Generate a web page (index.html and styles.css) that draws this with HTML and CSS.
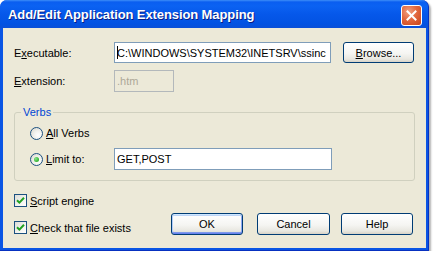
FILE: index.html
```html
<!doctype html>
<html>
<head>
<meta charset="utf-8">
<link rel="stylesheet" href="styles.css">
<title>Add/Edit Application Extension Mapping</title>
</head>
<body>
<div class="window">
  <div class="titlebar">
    <span class="title">Add/Edit Application Extension Mapping</span>
    <span class="close">
      <svg width="11" height="11" viewBox="0 0 11 11"><path d="M1.5 1.5 L9.5 9.5 M9.5 1.5 L1.5 9.5" stroke="#fff" stroke-width="2" stroke-linecap="square"/></svg>
    </span>
  </div>
  <div class="client">
    <div class="row">
      <span class="label">E<u>x</u>ecutable:</span>
      <div class="field field-exe"><span class="caret"></span>C:\WINDOWS\SYSTEM32\INETSRV\ssinc</div>
      <div class="button button-browse"><span><u>B</u>rowse...</span></div>
    </div>
    <div class="row row-ext">
      <span class="label"><u>E</u>xtension:</span>
      <div class="field field-ext disabled">.htm</div>
    </div>
    <fieldset class="group">
      <legend>Verbs</legend>
      <div class="option">
        <span class="radio"></span>
        <span class="option-label"><u>A</u>ll Verbs</span>
      </div>
      <div class="option">
        <span class="radio checked"><span class="dot"></span></span>
        <span class="option-label"><u>L</u>imit to:</span>
        <div class="field field-verbs">GET,POST</div>
      </div>
    </fieldset>
    <div class="footer">
      <div class="checks">
        <div class="check">
          <span class="box"><svg width="9" height="9" viewBox="0 0 9 9"><path d="M1 4.2 L3.4 6.6 L8 1.8" fill="none" stroke="#21a121" stroke-width="2"/></svg></span>
          <span><u>S</u>cript engine</span>
        </div>
        <div class="check">
          <span class="box"><svg width="9" height="9" viewBox="0 0 9 9"><path d="M1 4.2 L3.4 6.6 L8 1.8" fill="none" stroke="#21a121" stroke-width="2"/></svg></span>
          <span><u>C</u>heck that file exists</span>
        </div>
      </div>
      <div class="buttons">
        <div class="button button-default">OK</div>
        <div class="button button-cancel">Cancel</div>
        <div class="button">Help</div>
      </div>
    </div>
  </div>
</div>
</body>
</html>
```
FILE: styles.css
```css
body {
    margin: 0;
    background-color: #fff;
    font-family: "Liberation Sans", Arial, sans-serif;
    font-size: 11px;
    color: #000;
}
u {
    text-decoration: underline;
    text-underline-offset: 1px;
}
.window {
    width: 429px;
    height: 251px;
    display: flex;
    flex-direction: column;
    background-color: #0a55e4;
    border-radius: 7px 7px 0 0;
    box-shadow: 2px 2px 2px rgba(0, 0, 0, 0.3);
    border-right: 1px solid #0831c0;
    border-bottom: 1px solid #0831c0;
    box-sizing: border-box;
}
.titlebar {
    height: 28px;
    flex: none;
    display: flex;
    align-items: center;
    padding: 0 6px 0 8px;
    border-radius: 7px 7px 0 0;
    background: linear-gradient(#3d8ef8 0, #0a5ef0 2px, #0b62f2 6px, #0658ea 14px, #0252e2 24px, #0a4fd8 28px);
}
.title {
    color: #fff;
    font-weight: bold;
    font-size: 13px;
    letter-spacing: -0.1px;
    text-shadow: 1px 1px 0 #0a1e84;
}
.close {
    margin-left: auto;
    margin-top: 3px;
    width: 21px;
    height: 21px;
    box-sizing: border-box;
    border: 1px solid #fff;
    border-radius: 3px;
    display: flex;
    align-items: center;
    justify-content: center;
    background: radial-gradient(circle at 35% 30%, #f0a183 0, #e2683f 45%, #c8431a 100%);
}
.client {
    flex: 1;
    margin: 0 2px 2px 3px;
    background-color: #ece9d8;
    padding: 14px 0 0 11px;
}
.row {
    display: flex;
    align-items: center;
}
.label {
    width: 100px;
}
.field {
    box-sizing: border-box;
    height: 21px;
    border: 1px solid #7f9db9;
    background-color: #fff;
    padding: 0 2px;
    display: flex;
    align-items: center;
    white-space: nowrap;
    overflow: hidden;
}
.field-exe {
    width: 217px;
}
.caret {
    display: inline-block;
    width: 1px;
    height: 13px;
    background-color: #000;
    margin-right: -1px;
}
.row-ext {
    margin-top: 7px;
}
.field-ext {
    width: 60px;
    height: 22px;
}
.disabled {
    background-color: #ece9d8;
    border-color: #b3b8bb;
    color: #aca899;
}
.button {
    box-sizing: border-box;
    height: 22px;
    width: 72px;
    border: 1px solid #003c74;
    border-radius: 3px;
    display: flex;
    align-items: center;
    justify-content: center;
    background: linear-gradient(#fff 0, #f5f5f2 55%, #e8e7e0 85%, #d7d2c6 100%);
}
.button-browse {
    margin-left: 12px;
    width: 71px;
    height: 21px;
}
.button-default {
    box-shadow: inset 0 1px 0 #cee7ff, inset 0 -1px 0 #6982ee, inset 1px 0 0 #b3cdf8, inset -1px 0 0 #8fa9f2, inset 0 2px 0 #bcd4f6, inset 0 -2px 0 #7d99ea;
}
.button-cancel {
    width: 73px;
    margin-right: -3px;
}
.group {
    margin: 14px 0 0 0;
    width: 401px;
    box-sizing: border-box;
    padding: 4px 0 10px 6px;
    border: 1px solid #d0d0bf;
    border-radius: 3px;
}
.group legend {
    padding: 0 2px;
    color: #0046d5;
}
.option {
    display: flex;
    align-items: center;
    height: 22px;
    padding-left: 9px;
}
.option + .option {
    margin-top: 4px;
}
.radio {
    width: 13px;
    height: 13px;
    box-sizing: border-box;
    border: 1px solid #1c5180;
    border-radius: 50%;
    margin-right: 3px;
    display: flex;
    align-items: center;
    justify-content: center;
    background: radial-gradient(circle at 65% 65%, #fff 0, #f2f2ee 40%, #d6d4c8 100%);
}
.dot {
    width: 5px;
    height: 5px;
    border-radius: 50%;
    background: radial-gradient(circle at 35% 35%, #8ae589 0, #3cb93c 60%, #1e9a1e 100%);
}
.option-label {
    width: 68px;
}
.field-verbs {
    width: 218px;
    height: 22px;
}
.footer {
    display: flex;
}
.checks {
    width: 157px;
    margin-top: 13px;
    display: flex;
    flex-direction: column;
    gap: 14px;
}
.check {
    display: flex;
    align-items: center;
    height: 13px;
}
.box {
    width: 13px;
    height: 13px;
    box-sizing: border-box;
    border: 1px solid #1c5180;
    margin-right: 3px;
    display: flex;
    align-items: center;
    justify-content: center;
    background: linear-gradient(135deg, #dcdcd7 0, #f4f4f0 60%, #fff 100%);
}
.buttons {
    display: flex;
    margin-top: 32px;
    gap: 14px;
}
```
